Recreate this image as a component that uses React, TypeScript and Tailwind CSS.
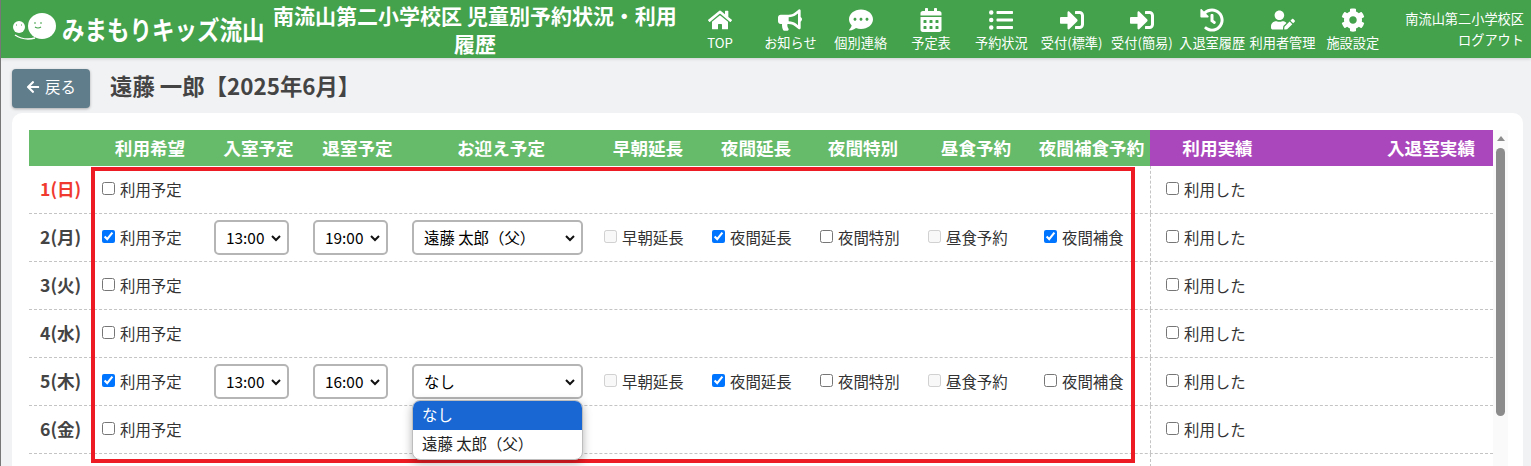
import { FaArrowLeft, FaBullhorn, FaCalendarAlt, FaCog, FaCommentDots, FaHistory, FaHome, FaListUl, FaSignInAlt, FaUserEdit } from "react-icons/fa"

const NAV_ITEMS = [
  { label: "TOP", icon: FaHome },
  { label: "お知らせ", icon: FaBullhorn },
  { label: "個別連絡", icon: FaCommentDots },
  { label: "予定表", icon: FaCalendarAlt },
  { label: "予約状況", icon: FaListUl },
  { label: "受付(標準)", icon: FaSignInAlt },
  { label: "受付(簡易)", icon: FaSignInAlt },
  { label: "入退室履歴", icon: FaHistory },
  { label: "利用者管理", icon: FaUserEdit },
  { label: "施設設定", icon: FaCog },
]

const COLS = "grid grid-cols-[62px_114px_99px_99px_190px_108px_108px_108px_116px_117px_135px_208px]"

const DAYS = [
  { label: "1(日)", red: true },
  { label: "2(月)", checked: true, inTime: "13:00", outTime: "19:00", pickup: "遠藤 太郎（父）", night: true, snack: true },
  { label: "3(火)" },
  { label: "4(水)" },
  { label: "5(木)", checked: true, inTime: "13:00", outTime: "16:00", pickup: "なし", night: true, snack: false },
  { label: "6(金)" },
]

const Check = ({ label, checked, disabled }: { label: string; checked?: boolean; disabled?: boolean }) => (
  <label className="flex items-center text-[15.4px] leading-none text-[#333]">
    <input
      type="checkbox"
      defaultChecked={checked}
      disabled={disabled}
      className="-ml-px mr-[5px] size-[13px] -translate-y-[1px] accent-[#0075ff]"
    />
    {label}
  </label>
)

const FakeSelect = ({ value, width }: { value: string; width: string }) => (
  <div
    className={`${width} flex h-[35px] items-center justify-between rounded-[5px] border-2 border-[#b5b5b5] bg-white pl-[10px] pr-[4px] text-[15.4px] text-black`}
  >
    <span>{value}</span>
    <svg width="12" height="12" viewBox="0 0 12 12" className="mr-[1px]">
      <path d="M2 4l4 4 4-4" fill="none" stroke="#111" strokeWidth="2" />
    </svg>
  </div>
)

const Row = ({ day }: { day: (typeof DAYS)[number] }) => (
  <div className={`${COLS} h-[48px] items-center border-b border-dashed border-[#c4c4c4]`}>
    <div className={`pl-[11px] text-[17.6px] font-bold ${day.red ? "text-[#f03a30]" : "text-[#444]"}`}>{day.label}</div>
    <div className="pl-[12px]">
      <Check label="利用予定" checked={day.checked} />
    </div>
    {day.checked ? (
      <>
        <div className="pl-[9px]">
          <FakeSelect value={day.inTime ?? ""} width="w-[75px]" />
        </div>
        <div className="pl-[9px]">
          <FakeSelect value={day.outTime ?? ""} width="w-[75px]" />
        </div>
        <div className="pl-[9px]">
          <FakeSelect value={day.pickup ?? ""} width="w-[171px]" />
        </div>
        <div className="pl-[12px]">
          <Check label="早朝延長" disabled />
        </div>
        <div className="pl-[12px]">
          <Check label="夜間延長" checked={day.night} />
        </div>
        <div className="pl-[12px]">
          <Check label="夜間特別" />
        </div>
        <div className="pl-[12px]">
          <Check label="昼食予約" disabled />
        </div>
        <div className="pl-[12px]">
          <Check label="夜間補食" checked={day.snack} />
        </div>
      </>
    ) : (
      <div className="col-span-8" />
    )}
    <div className="flex h-full items-center border-l border-dashed border-[#c4c4c4] pl-[16px]">
      <Check label="利用した" />
    </div>
  </div>
)

const App = () => {
  const hd = "whitespace-nowrap text-center text-[17.6px] font-bold text-white"
  return (
    <div className="relative h-[466px] w-[1531px] overflow-hidden bg-[#f1f2f4] font-['Noto_Sans_CJK_JP',sans-serif]">
      <header className="flex h-[58px] items-center bg-[#43a24b] text-white shadow-[0_1px_3px_rgba(0,0,0,0.15)]">
        <div className="ml-[11px] flex w-[259px] shrink-0 items-center">
          <svg width="46" height="36" viewBox="0 0 46 36">
            <ellipse cx="31" cy="15" rx="14" ry="13" fill="#fff" />
            <circle cx="8" cy="16" r="6" fill="#fff" />
            <path d="M4 24q9 6 20 3" fill="none" stroke="#fff" strokeWidth="1.5" />
            <path d="M23 12h2M29 12h2M24 16q3 2 6 0M5 14h1M10 14h1" fill="none" stroke="#43a24b" strokeWidth="1.2" />
          </svg>
          <span className="ml-[5px] origin-center scale-y-[1.15] whitespace-nowrap text-[22.5px] font-bold leading-none">
            みまもりキッズ流山
          </span>
        </div>
        <h1 className="w-[410px] shrink-0 text-center text-[21px] font-bold leading-[28px]">
          南流山第二小学校区 児童別予約状況・利用履歴
        </h1>
        <nav className="ml-[5px] flex">
          {NAV_ITEMS.map(({ label, icon: Icon }) => (
            <div key={label} className="flex w-[70.3px] flex-col items-center">
              <Icon className="mb-[3px] size-[24px]" />
              <span className="whitespace-nowrap text-[13.2px] leading-[16px]">{label}</span>
            </div>
          ))}
        </nav>
        <div className="ml-auto mr-[7px] whitespace-nowrap text-right text-[13.2px] leading-[16px]">
          <div className="mb-[5px]">南流山第二小学校区</div>
          <div>ログアウト</div>
        </div>
      </header>

      <div className="flex h-[55px] items-start pl-[12px] pt-[11px]">
        <button
          type="button"
          className="flex h-[39px] w-[78px] items-center justify-center gap-[5px] rounded-[4px] bg-[#607d8b] pb-[3px] text-[15.4px] text-white shadow-[0_1px_3px_rgba(0,0,0,0.3)]"
        >
          <FaArrowLeft className="size-[14px]" />
          戻る
        </button>
        <h2 className="ml-[20px] mt-[3px] text-[22.4px] font-bold leading-[26px] text-[#444]">遠藤 一郎【2025年6月】</h2>
      </div>

      <main className="ml-[12px] flex h-[400px] w-[1511px] rounded-t-[10px] bg-white pl-[17px] pt-[17px]">
        <div className="w-[1464px] shrink-0">
          <div className={`${COLS} h-[36px] items-center`}>
            <div className="col-span-10 grid h-full grid-cols-subgrid items-center bg-[#66bb6a]">
              <div />
              <div className={`${hd} pl-[4px]`}>利用希望</div>
              <div className={`${hd} pl-[8px]`}>入室予定</div>
              <div className={`${hd} pl-[8px]`}>退室予定</div>
              <div className={`${hd} pl-[6px]`}>お迎え予定</div>
              <div className={`${hd} pl-[2px]`}>早朝延長</div>
              <div className={`${hd} pl-[2px]`}>夜間延長</div>
              <div className={hd}>夜間特別</div>
              <div className={`${hd} pl-[2px]`}>昼食予約</div>
              <div className={hd}>夜間補食予約</div>
            </div>
            <div className="col-span-2 grid h-full grid-cols-subgrid items-center bg-[#ab47bc]">
              <div className={hd}>利用実績</div>
              <div className={`${hd} pr-[18px] text-right`}>入退室実績</div>
            </div>
          </div>
          {DAYS.map((day) => (
            <Row key={day.label} day={day} />
          ))}
          <div className={`${COLS} h-[48px]`}>
            <div className="col-span-10" />
            <div className="h-full border-l border-dashed border-[#c4c4c4]" />
          </div>
        </div>
        <div className="flex h-full w-[15px] flex-col items-center bg-[#fafafa]">
          <div className="mt-[6px] size-0 border-x-[4px] border-b-[5px] border-x-transparent border-b-[#8c8c8c]" />
          <div className="mt-[7px] h-[268px] w-[9px] rounded-full bg-[#8c8c8c]" />
        </div>
      </main>

      <div className="pointer-events-none absolute left-[91px] top-[167px] h-[296px] w-[1044px] border-4 border-[#ed1c24]" />

      <div className="absolute left-[412px] top-[400px] w-[171px] overflow-hidden rounded-[8px] border border-[#bdbdbd] bg-white text-[15.4px] text-[#222] shadow-[0_3px_10px_rgba(0,0,0,0.3)]">
        <div className="flex h-[29px] items-center bg-[#1967d2] pb-[2px] pl-[9px] text-white">なし</div>
        <div className="flex h-[29px] items-center pb-[2px] pl-[9px]">遠藤 太郎（父）</div>
      </div>

      <div className="absolute left-0 top-0 h-full w-px bg-[#777]" />
    </div>
  )
}

export default App
